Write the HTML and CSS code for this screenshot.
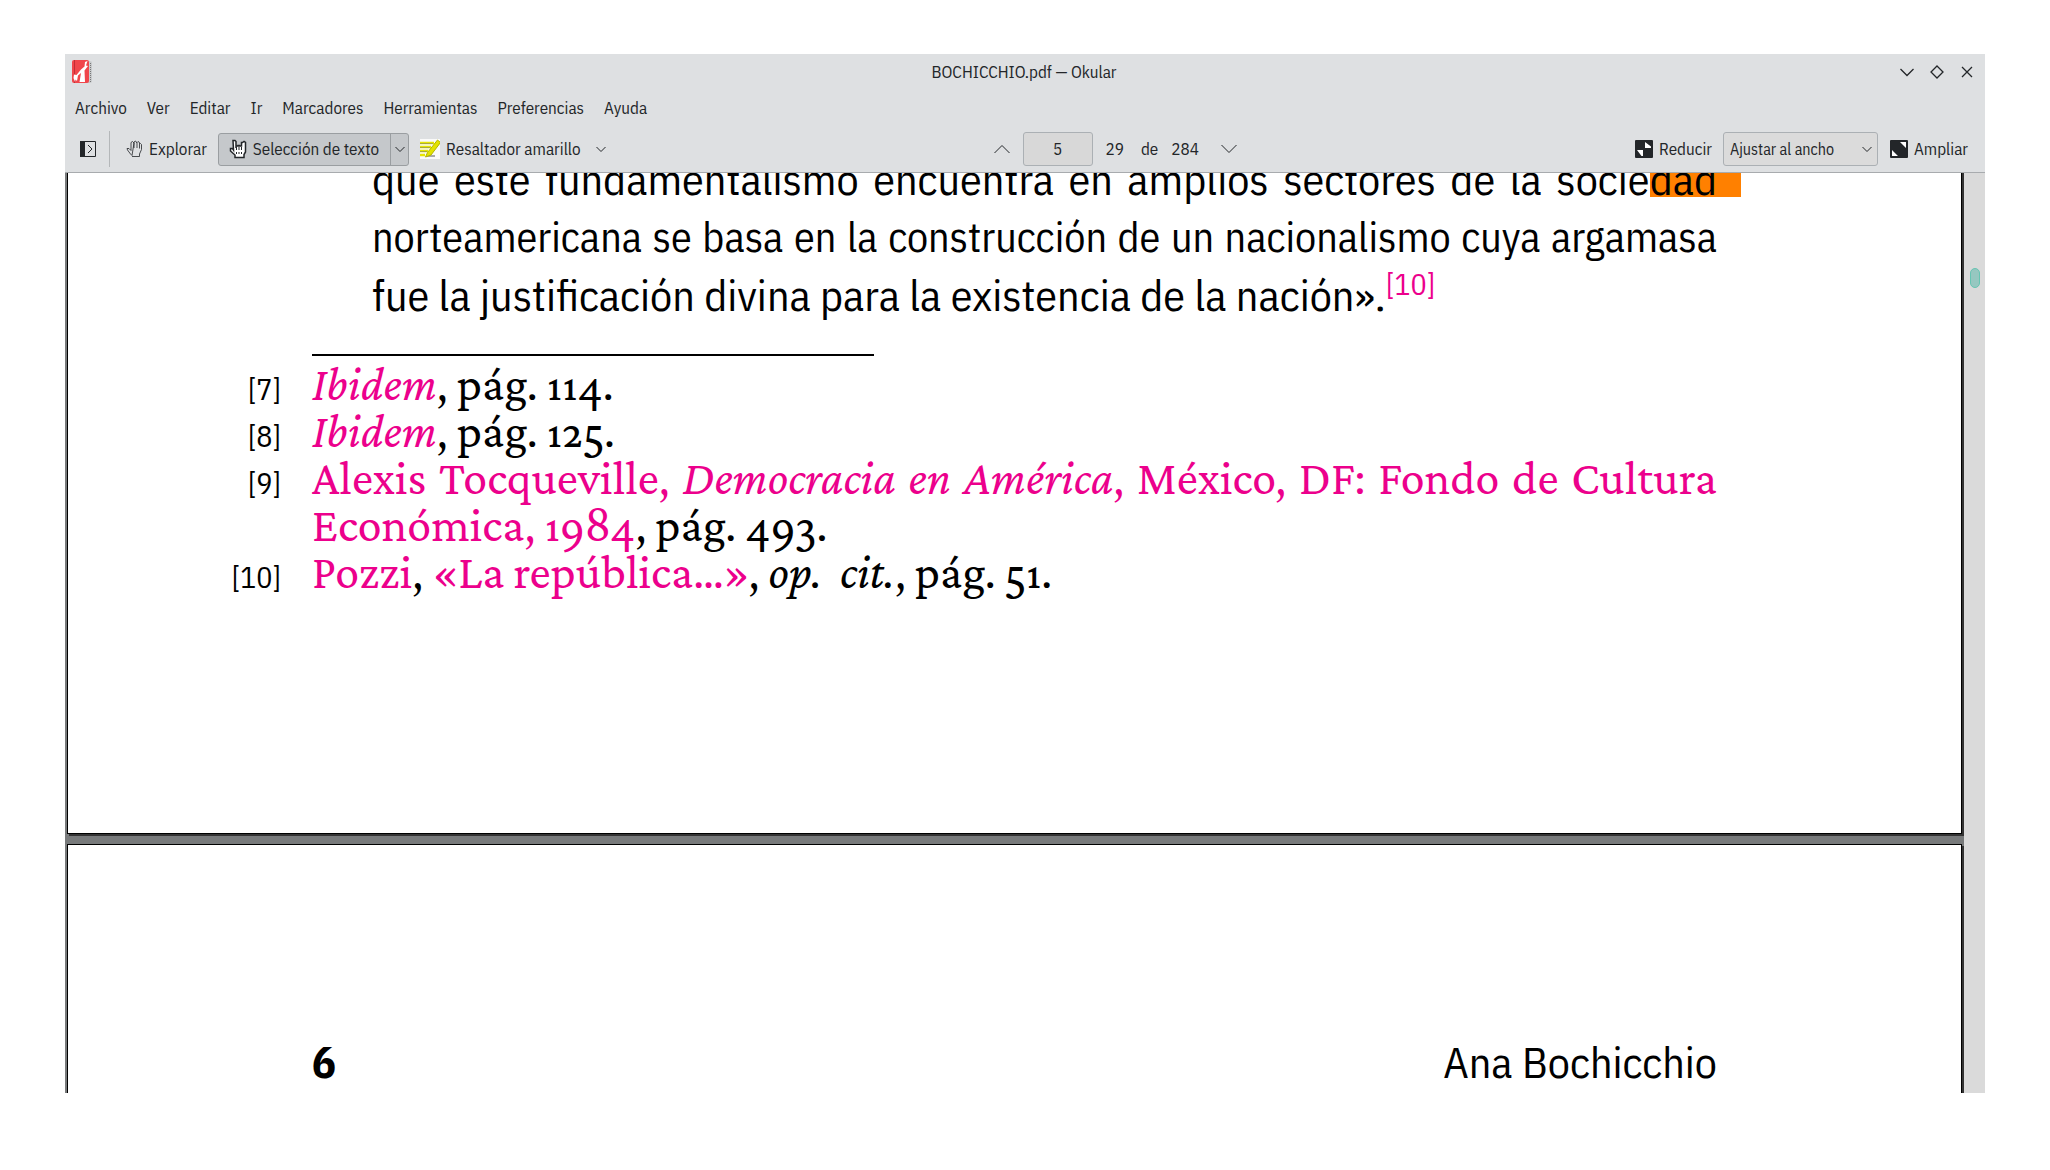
FILE: index.html
```html
<!DOCTYPE html>
<html lang="es">
<head>
<meta charset="utf-8">
<title>BOCHICCHIO.pdf — Okular</title>
<link rel="stylesheet" href="styles.css">
</head>
<body>
<div class="window">
  <header class="titlebar">
    <svg class="app-icon" viewBox="0 0 22 24" aria-hidden="true">
      <rect x="2" y="1" width="18" height="22" rx="2" fill="#c9cbcd"/>
      <path d="M18.500 3v19" stroke="#777" stroke-width="1" stroke-dasharray="1 1"/>
      <rect x="0" y="0" width="17" height="23" rx="2" fill="#f0464b"/>
      <path d="M2.500 0v23" stroke="#c22d35" stroke-width="1"/>
      <path d="M15.500 1L14 5.500l2 .5-3.500 4.500L13 22H7.500L9 13l-3 2.500L5 21l-1.500-1.500L3 22l-1.500-4L2 14.500l2.500.5L9 9.500l3.500-3L13 2z" fill="#fff"/>
    </svg>
    <h1 class="window-title">BOCHICCHIO.pdf — Okular</h1>
    <div class="window-buttons">
      <button class="icon-button" aria-label="Minimizar"><svg width="18" height="18" viewBox="0 0 18 18"><path d="M2.500 6l6.500 6.500 6.500-6.500"/></svg></button>
      <button class="icon-button" aria-label="Maximizar"><svg width="18" height="18" viewBox="0 0 18 18"><path d="M9 3l6 6-6 6-6-6z"/></svg></button>
      <button class="icon-button" aria-label="Cerrar"><svg width="18" height="18" viewBox="0 0 18 18"><path d="M4 4l10 10M14 4l-10 10"/></svg></button>
    </div>
  </header>

  <nav class="menubar">
    <button>Archivo</button><button>Ver</button><button>Editar</button><button>Ir</button><button>Marcadores</button><button>Herramientas</button><button>Preferencias</button><button>Ayuda</button>
  </nav>

  <div class="toolbar">
    <div class="tools">
      <button class="tool sidebar-toggle" aria-label="Panel lateral">
        <svg width="16" height="16" viewBox="0 0 16 16"><path d="M.5.5h15v15h-15z"/><path d="M0 0h5v16h-5z" fill="#232629" stroke="none"/><path d="M8 4l4 4-4 4"/></svg>
      </button>
      <span class="separator"></span>
      <button class="tool browse">
        <svg width="17" height="18" viewBox="0 0 17 18" stroke-width=".8"><path d="M6 16.500h7.500V14l2-4.500V4.500L14.500 3.500l-1 1V8.500M13.500 4.500V2.500L12 1.500l-1 1V8M11 3L9.500 1 8 2v6M8 3L6.500 1.500 5 2.500v8L3 8.500H1L1.500 10l3 4L6 15.500z"/></svg>
        Explorar
      </button>
      <div class="split-button">
        <button class="tool split-main" aria-pressed="true">
          <svg width="18" height="20" viewBox="0 0 18 20"><path d="M4 1.500h2l1 1V9V7h2v-.5h1.500V7h2V3.500h1l1.500-1 1.500 1V13l-1.500 2.500v3h-9V16L1.500 12V9.500h2L4.500 11z" fill="#fff" stroke-width="1.500"/><path d="M7.500 8v3M10 8v3M12.500 8v3M7.500 13v2M10 13v2M12.500 13v2"/></svg>
          Selección de texto
        </button>
        <button class="split-arrow" aria-label="Más herramientas de selección"><svg width="12" height="12" viewBox="0 0 12 12"><path d="M1.500 4l4.500 4.500 4.500-4.500"/></svg></button>
      </div>
      <button class="tool marker">
        <svg width="20" height="22" viewBox="0 0 20 22"><path d="M0 1h20v20H0z" fill="#fafafa" stroke="none"/><path d="M0 5h14M0 9h11M0 13h8M0 17h5" stroke="#e6e600" stroke-width="2.500"/><path d="M0 5.500h13M0 9.500h10M0 13.500h7" stroke="#a9a93c"/><path d="M6 18h9" stroke="#aaa" stroke-width="2"/><path d="M17.500 2l3 2.500L11 17l-5.500 2 2-4.500z" fill="#e3e300" stroke="#b5b500"/></svg>
        Resaltador amarillo
        <svg class="marker-arrow" width="12" height="12" viewBox="0 0 12 12"><path d="M1.500 4l4.500 4.500 4.500-4.500"/></svg>
      </button>
    </div>

    <div class="pager">
      <button class="icon-button" aria-label="Página anterior"><svg width="18" height="18" viewBox="0 0 18 18"><path d="M1.500 13L9 5.500l7.500 7.500"/></svg></button>
      <input class="page-input" type="text" value="5" aria-label="Página">
      <span class="page-label">29</span>
      <span class="page-of">de</span>
      <span class="page-total">284</span>
      <button class="icon-button" aria-label="Página siguiente"><svg width="18" height="18" viewBox="0 0 18 18"><path d="M1.500 5L9 12.500l7.500-7.500"/></svg></button>
    </div>

    <div class="zoom">
      <button class="tool">
        <svg width="18" height="18" viewBox="0 0 18 18"><rect width="18" height="18" rx="1" fill="#232629" stroke="none"/><path d="M10 2l6 4.500V8h-6zM2 10h6v6H6.500z" fill="#fff" stroke="none"/></svg>
        Reducir
      </button>
      <div class="select-box">
        <select aria-label="Ampliación"><option>Ajustar al ancho</option></select>
        <svg class="select-arrow" width="12" height="12" viewBox="0 0 12 12"><path d="M1.500 4l4.500 4.500 4.500-4.500"/></svg>
      </div>
      <button class="tool">
        <svg width="18" height="18" viewBox="0 0 18 18"><rect width="18" height="18" rx="1" fill="#232629" stroke="none"/><path d="M10 2h6v6zM2 10l6 6H2z" fill="#fff" stroke="none"/></svg>
        Ampliar
      </button>
    </div>
  </div>

  <main class="viewer">
    <div class="pages">
      <article class="page page-first">
        <div class="body-text">
          <p class="justified">que este fundamentalismo encuentra en amplios sectores de la socie<mark>dad</mark></p>
          <p class="justified tight">norteamericana se basa en la construcción de un nacionalismo cuya argamasa</p>
          <p>fue la justificación divina para la existencia de la nación».<a class="note-ref" href="#nota10">[10]</a></p>
        </div>
        <hr class="note-rule">
        <div class="notes">
          <span class="note-number">[7]</span>
          <p><a href="#ibidem"><i>Ibidem</i></a>, pág. 114.</p>
          <span class="note-number">[8]</span>
          <p><a href="#ibidem"><i>Ibidem</i></a>, pág. 125.</p>
          <span class="note-number">[9]</span>
          <div>
            <p class="justified"><a href="#tocqueville">Alexis Tocqueville, <i>Democracia en América</i>, México, DF: Fondo de Cultura</a></p>
            <p><a href="#tocqueville">Económica, 1984</a>, pág. 493.</p>
          </div>
          <span class="note-number">[10]</span>
          <p id="nota10"><a href="#pozzi">Pozzi</a>, <a href="#pozzi">«La república…»</a>, <i>op.&nbsp; cit.</i>, pág. 51.</p>
        </div>
      </article>
      <article class="page page-second">
        <div class="running-head"><b>6</b><span>Ana Bochicchio</span></div>
      </article>
    </div>
    <div class="scrollbar"><div class="thumb"></div></div>
  </main>
</div>
</body>
</html>
```
FILE: styles.css
```css
* {
  box-sizing: border-box;
}

body {
  margin: 0;
  height: 100vh;
  padding: 54px 65px 77px;
  background: #fff;
  color: #232629;
  font: 17px/22px "IBM Plex Sans Condensed", "Roboto Condensed", "Liberation Sans", sans-serif;
}

button, input, select {
  margin: 0;
  padding: 0;
  border: 0;
  background: none;
  color: inherit;
  font: inherit;
}

svg {
  display: block;
  flex: none;
  fill: none;
  stroke: #232629;
}

p, h1 {
  margin: 0;
}

.window {
  display: flex;
  flex-direction: column;
  height: 100%;
  background: #dee0e2;
}

/* Title bar */
.titlebar {
  display: grid;
  grid-template-columns: 1fr auto 1fr;
  align-items: center;
  height: 36px;
  padding: 0 9px 0 7px;
}

.app-icon {
  width: 22px;
  height: 24px;
  stroke: none;
}

.window-title {
  font-size: 17px;
  font-weight: 400;
}

.window-buttons {
  display: flex;
  justify-content: flex-end;
  gap: 12px;
}

.window-buttons svg {
  stroke-width: 1.3;
}

/* Menu bar */
.menubar {
  display: flex;
  gap: 20px;
  height: 36px;
  padding: 0 10px;
}

/* Toolbar */
.toolbar {
  display: flex;
  justify-content: space-between;
  align-items: center;
  height: 47px;
  padding: 0 17px 0 15px;
  border-bottom: 1px solid #a8abae;
}

.tools, .pager, .zoom, .tool {
  display: flex;
  align-items: center;
}

.tool {
  gap: 6px;
  white-space: nowrap;
}

.separator {
  width: 1px;
  height: 36px;
  margin: 0 16px 0 13px;
  background: #b4b7b9;
}

.split-button {
  display: flex;
  height: 33px;
  margin: 0 11px;
  border: 1px solid #9a9ea1;
  border-radius: 3px;
  background: #c5c8cb;
}

.split-main {
  padding: 0 11px 0 10px;
}

.split-arrow {
  padding: 0 2px 0 3px;
  border-left: 1px solid #9a9ea1;
}

.marker-arrow {
  margin-left: 9px;
}

.pager {
  margin-right: 12px;
}

.page-input {
  width: 70px;
  height: 34px;
  margin: 0 13px 0 12px;
  border: 1px solid #abb0b4;
  border-radius: 3px;
  background: #d8d8d8;
  text-align: center;
}

.page-of {
  margin: 0 13px 0 17px;
}

.page-total {
  margin-right: 21px;
}

.select-box {
  position: relative;
  margin: 0 12px 0 11px;
}

.select-box select {
  display: block;
  width: 155px;
  height: 34px;
  padding: 0 6px;
  appearance: none;
  border: 1px solid #abb0b4;
  border-radius: 3px;
  background: #dbdbdb;
  font-size: 16px;
}

.select-arrow {
  position: absolute;
  top: 11px;
  right: 5px;
  pointer-events: none;
}

/* Document viewer */
.viewer {
  display: flex;
  flex: 1;
  min-height: 0;
}

.pages {
  display: flex;
  flex: 1;
  flex-direction: column;
  gap: 10px;
  overflow: hidden;
  padding: 0 2px;
  background: #787a7b;
  color: #000;
  font-size: 44px;
  line-height: 58px;
}

.page {
  flex: none;
  padding: 0 244px;
  border: 1px solid #000;
  background: #fff;
  box-shadow: 2px 2px 0 #333;
}

.page-first {
  margin-top: -24px;
  padding-bottom: 238px;
}

.page-second {
  padding-top: 188px;
  padding-bottom: 244px;
}

.body-text {
  padding-left: 60px;
}

.body-text p, .notes p {
  white-space: nowrap;
}

.justified {
  text-align: justify;
  text-align-last: justify;
}

.body-text .justified, .notes .justified {
  white-space: normal;
}

.tight {
  font-size: 42px;
}

mark {
  margin-right: -24px;
  padding-right: 24px;
  background: linear-gradient(#ff8000, #ff8000) 0 0 / 100% 47px no-repeat;
  color: inherit;
}

a {
  color: #ec008c;
  text-decoration: none;
}

.note-ref {
  font-size: 30px;
  line-height: 1;
  vertical-align: 16px;
}

.note-rule {
  width: 40%;
  height: 2px;
  margin: 30px 0 4px;
  border: 0;
  background: #000;
}

.notes {
  display: grid;
  grid-template-columns: 113px 1fr;
  column-gap: 31px;
  align-items: baseline;
  margin-left: -144px;
  font: 48px/47px "Crimson Pro", "Liberation Serif", serif;
  font-variant-numeric: oldstyle-nums;
}

.note-number {
  font: 30px/30px "IBM Plex Sans Condensed", "Roboto Condensed", "Liberation Sans", sans-serif;
  text-align: right;
}

.running-head {
  display: flex;
  justify-content: space-between;
}

/* Scrollbar */
.scrollbar {
  width: 21px;
  padding: 95px 5px 0 6px;
  background: #dadada;
}

.thumb {
  height: 20px;
  border: 1px solid #66c5b3;
  border-radius: 5px;
  background: #96c7c0;
}
```
